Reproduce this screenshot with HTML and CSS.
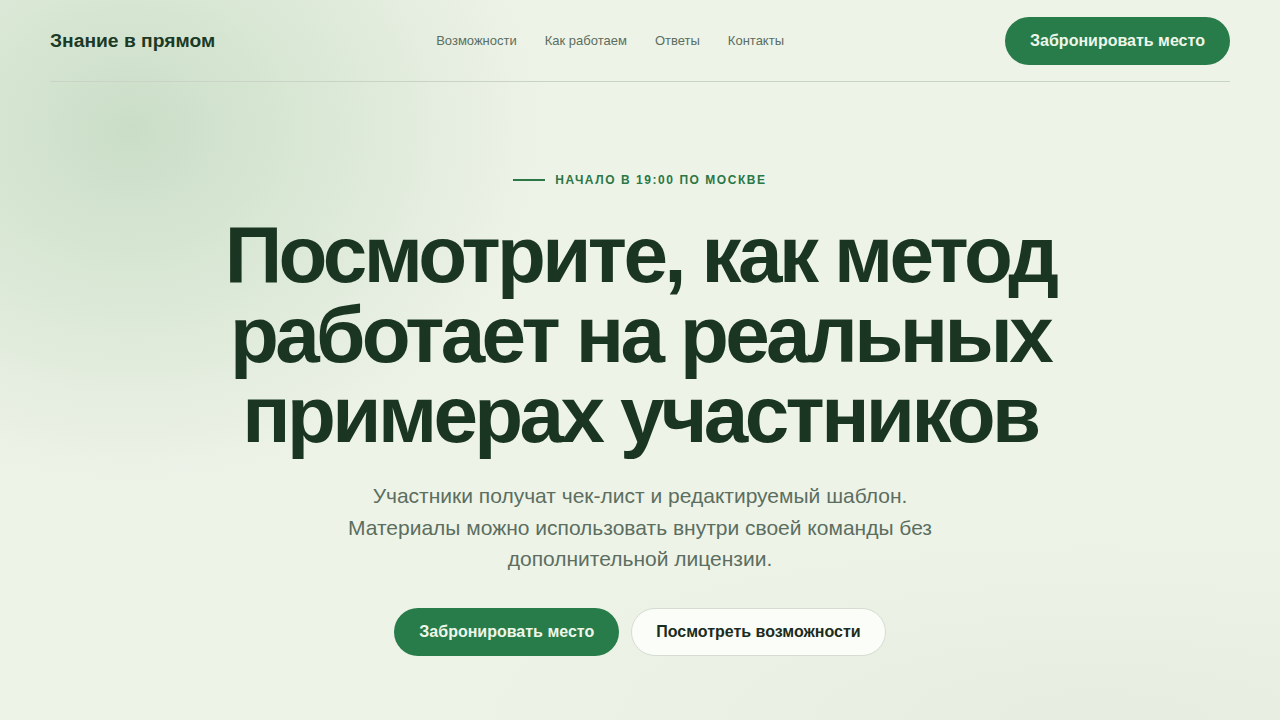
FILE: index.html
```html
<!DOCTYPE html>
<html lang="ru">
<head>
<meta charset="utf-8">
<title>Знание в прямом</title>
<link rel="stylesheet" href="styles.css">
</head>
<body>
<div class="page">
  <header class="header">
    <div class="logo">Знание в прямом</div>
    <nav class="nav">
      <a href="#">Возможности</a>
      <a href="#">Как работаем</a>
      <a href="#">Ответы</a>
      <a href="#">Контакты</a>
    </nav>
    <a class="btn btn-primary" href="#">Забронировать место</a>
  </header>
  <main class="hero">
    <div class="eyebrow"><span class="eyebrow-line"></span>Начало в 19:00 по Москве</div>
    <h1 class="title">Посмотрите, как метод работает на реальных примерах участников</h1>
    <p class="lead">Участники получат чек-лист и редактируемый шаблон. Материалы можно использовать внутри своей команды без дополнительной лицензии.</p>
    <div class="actions">
      <a class="btn btn-primary" href="#">Забронировать место</a>
      <a class="btn btn-secondary" href="#">Посмотреть возможности</a>
    </div>
  </main>
</div>
</body>
</html>
```
FILE: styles.css
```css
* { box-sizing: border-box; }
html, body { margin: 0; padding: 0; }
body {
  font-family: "Liberation Sans", Arial, sans-serif;
  background-color: #eef3e8;
  background-image:
    radial-gradient(ellipse 420px 360px at 130px 130px, rgba(190, 215, 188, 0.75), rgba(190, 215, 188, 0) 100%),
    radial-gradient(ellipse 700px 200px at 1100px 720px, rgba(228, 236, 222, 0.8), rgba(228, 236, 222, 0) 100%);
  min-height: 720px;
  color: #1b3a26;
  overflow: hidden;
}
.page {
  width: 1180px;
  margin: 0 auto;
}
.header {
  height: 82px;
  display: flex;
  align-items: center;
  justify-content: space-between;
  border-bottom: 1px solid #c9d3c6;
}
.logo {
  font-size: 19.25px;
  font-weight: 700;
  color: #1b3a26;
}
.nav {
  display: flex;
  gap: 28px;
}
.nav a {
  font-size: 13px;
  color: #5b6e5f;
  text-decoration: none;
}
.btn {
  display: inline-flex;
  align-items: center;
  justify-content: center;
  height: 48px;
  padding: 0 25px;
  border-radius: 24px;
  font-size: 16px;
  font-weight: 700;
  text-decoration: none;
}
.btn-primary {
  background: #287c49;
  color: #eef6ea;
}
.header .btn-primary { width: 225px; }
.btn-secondary {
  background: #fbfdf8;
  color: #1b2c20;
  border: 1px solid #d7dcd3;
  padding: 0 24px;
}
.hero {
  display: flex;
  flex-direction: column;
  align-items: center;
  text-align: center;
  padding-top: 90px;
}
.eyebrow {
  display: flex;
  align-items: center;
  gap: 10px;
  font-size: 12px;
  font-weight: 700;
  text-transform: uppercase;
  letter-spacing: 1.55px;
  color: #2b7746;
  height: 16px;
}
.eyebrow-line {
  width: 32px;
  height: 2px;
  background: #2b7746;
}
.title {
  margin: 27px 0 0;
  font-size: 80px;
  line-height: 80px;
  font-weight: 700;
  letter-spacing: -3.6px;
  color: #1a3622;
  width: 900px;
}
.lead {
  margin: 25px 0 0;
  width: 600px;
  font-size: 21px;
  line-height: 31.5px;
  color: #5b6e60;
}
.actions {
  display: flex;
  gap: 12px;
  margin-top: 33px;
}
```
